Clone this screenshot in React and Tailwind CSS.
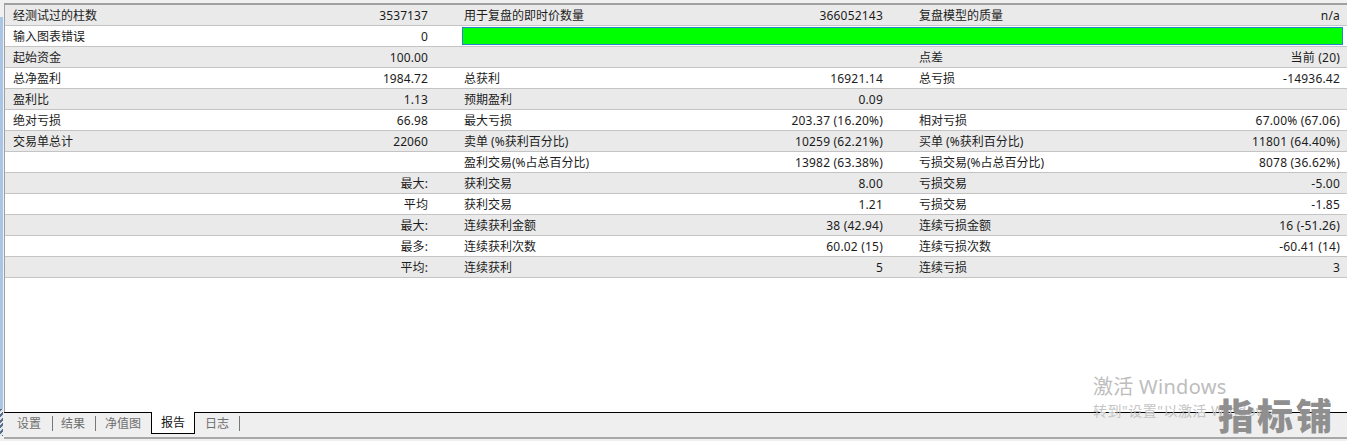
const rows = [
  { a: "经测试过的柱数", b: "3537137", c: "用于复盘的即时价数量", d: "366052143", e: "复盘模型的质量", f: "n/a" },
  { a: "输入图表错误", b: "0", bar: true },
  { a: "起始资金", b: "100.00", c: "", d: "", e: "点差", f: "当前 (20)" },
  { a: "总净盈利", b: "1984.72", c: "总获利", d: "16921.14", e: "总亏损", f: "-14936.42" },
  { a: "盈利比", b: "1.13", c: "预期盈利", d: "0.09", e: "", f: "" },
  { a: "绝对亏损", b: "66.98", c: "最大亏损", d: "203.37 (16.20%)", e: "相对亏损", f: "67.00% (67.06)" },
  { a: "交易单总计", b: "22060", c: "卖单 (%获利百分比)", d: "10259 (62.21%)", e: "买单 (%获利百分比)", f: "11801 (64.40%)" },
  { a: "", b: "", c: "盈利交易(%占总百分比)", d: "13982 (63.38%)", e: "亏损交易(%占总百分比)", f: "8078 (36.62%)" },
  { a: "", b: "最大:", c: "获利交易", d: "8.00", e: "亏损交易", f: "-5.00" },
  { a: "", b: "平均", c: "获利交易", d: "1.21", e: "亏损交易", f: "-1.85" },
  { a: "", b: "最大:", c: "连续获利金额", d: "38 (42.94)", e: "连续亏损金额", f: "16 (-51.26)" },
  { a: "", b: "最多:", c: "连续获利次数", d: "60.02 (15)", e: "连续亏损次数", f: "-60.41 (14)" },
  { a: "", b: "平均:", c: "连续获利", d: "5", e: "连续亏损", f: "3" },
];

function ReportRow({ row, index }) {
  const shaded = index % 2 === 0;
  return (
    <div className={`flex h-[21px] shrink-0 items-center border-b border-[#c4c4c4] pt-px text-xs leading-none text-[#1c1c1c] ${shaded ? "bg-[#eaeaea]" : "bg-white"}`}>
      <div className="flex w-[423px] shrink-0 justify-between whitespace-nowrap pl-[8px]">
        <span>{row.a}</span>
        <span className="tracking-[0.1px]">{row.b}</span>
      </div>
      {row.bar ? (
        <div className="ml-[34px] h-[18px] w-[881px] self-start border border-[#2f7fd0] bg-[#00ff00]" />
      ) : (
        <>
          <div className="ml-[36px] flex w-[419px] shrink-0 justify-between whitespace-nowrap">
            <span>{row.c}</span>
            <span className="tracking-[0.2px]">{row.d}</span>
          </div>
          <div className="ml-[36px] flex w-[421px] shrink-0 justify-between whitespace-nowrap">
            <span>{row.e}</span>
            <span className="tracking-[0.2px]">{row.f}</span>
          </div>
        </>
      )}
    </div>
  );
}

export default function App() {
  return (
    <div className="relative flex h-[441px] w-[1347px] overflow-hidden bg-[#f0f0f0] font-['Noto_Sans','Noto_Sans_CJK_SC',sans-serif]">
      {/* left edge */}
      <div className="flex w-[4px] shrink-0 flex-col pt-[17px]">
        <div className="w-[3px] flex-1 bg-[#a9c6e6]" />
        <div className="mb-[5px] h-[27px] w-[3px] bg-[repeating-linear-gradient(135deg,#5c6f86_0px,#5c6f86_2px,#dfe6ee_2px,#dfe6ee_4px)]" />
      </div>

      <div className="flex min-w-0 flex-1 flex-col">
        <div className="h-[3px] shrink-0" />
        {/* report table */}
        <div className="flex min-h-0 flex-1 flex-col border-t-2 border-l border-[#a0a0a0] bg-white">
          {rows.map((row, i) => (
            <ReportRow key={i} row={row} index={i} />
          ))}
        </div>

        {/* tabs */}
        <div className="flex h-[24px] shrink-0 items-start border-t border-black bg-[#efefef] pl-[13px] text-xs text-[#6e6e6e]">
          <span className="flex h-[21px] items-center">设置</span>
          <span className="ml-[11px] mt-[3px] h-[15px] w-px bg-[#777]" />
          <span className="ml-[8px] flex h-[21px] items-center">结果</span>
          <span className="ml-[10px] mt-[3px] h-[15px] w-px bg-[#777]" />
          <span className="ml-[9px] flex h-[21px] items-center">净值图</span>
          <span className="-mt-px ml-[10px] flex h-[22px] w-[44px] items-center justify-center border-x border-b border-black bg-white text-[#111]">报告</span>
          <span className="ml-[10px] flex h-[21px] items-center">日志</span>
          <span className="ml-[10px] mt-[3px] h-[15px] w-px bg-[#777]" />
        </div>
        <div className="mb-[2px] mt-[1px] h-[2px] shrink-0 bg-[#a8a8a8]" />
      </div>

      {/* activation watermark */}
      <div className="absolute left-[1093px] top-[376px] text-xl leading-[22px] tracking-[0.3px] text-[#bdbdbd]">激活 Windows</div>
      <div className="absolute left-[1093px] top-[402px] whitespace-nowrap text-sm leading-[18px] tracking-[0.5px] text-[#c4c4c4]">转到"设置"以激活 Windows。</div>
      <div className="absolute left-[1218px] top-[395px] text-[36px] font-black leading-[44px] tracking-[3px] text-[#8f8f8f]">指标铺</div>
    </div>
  );
}
